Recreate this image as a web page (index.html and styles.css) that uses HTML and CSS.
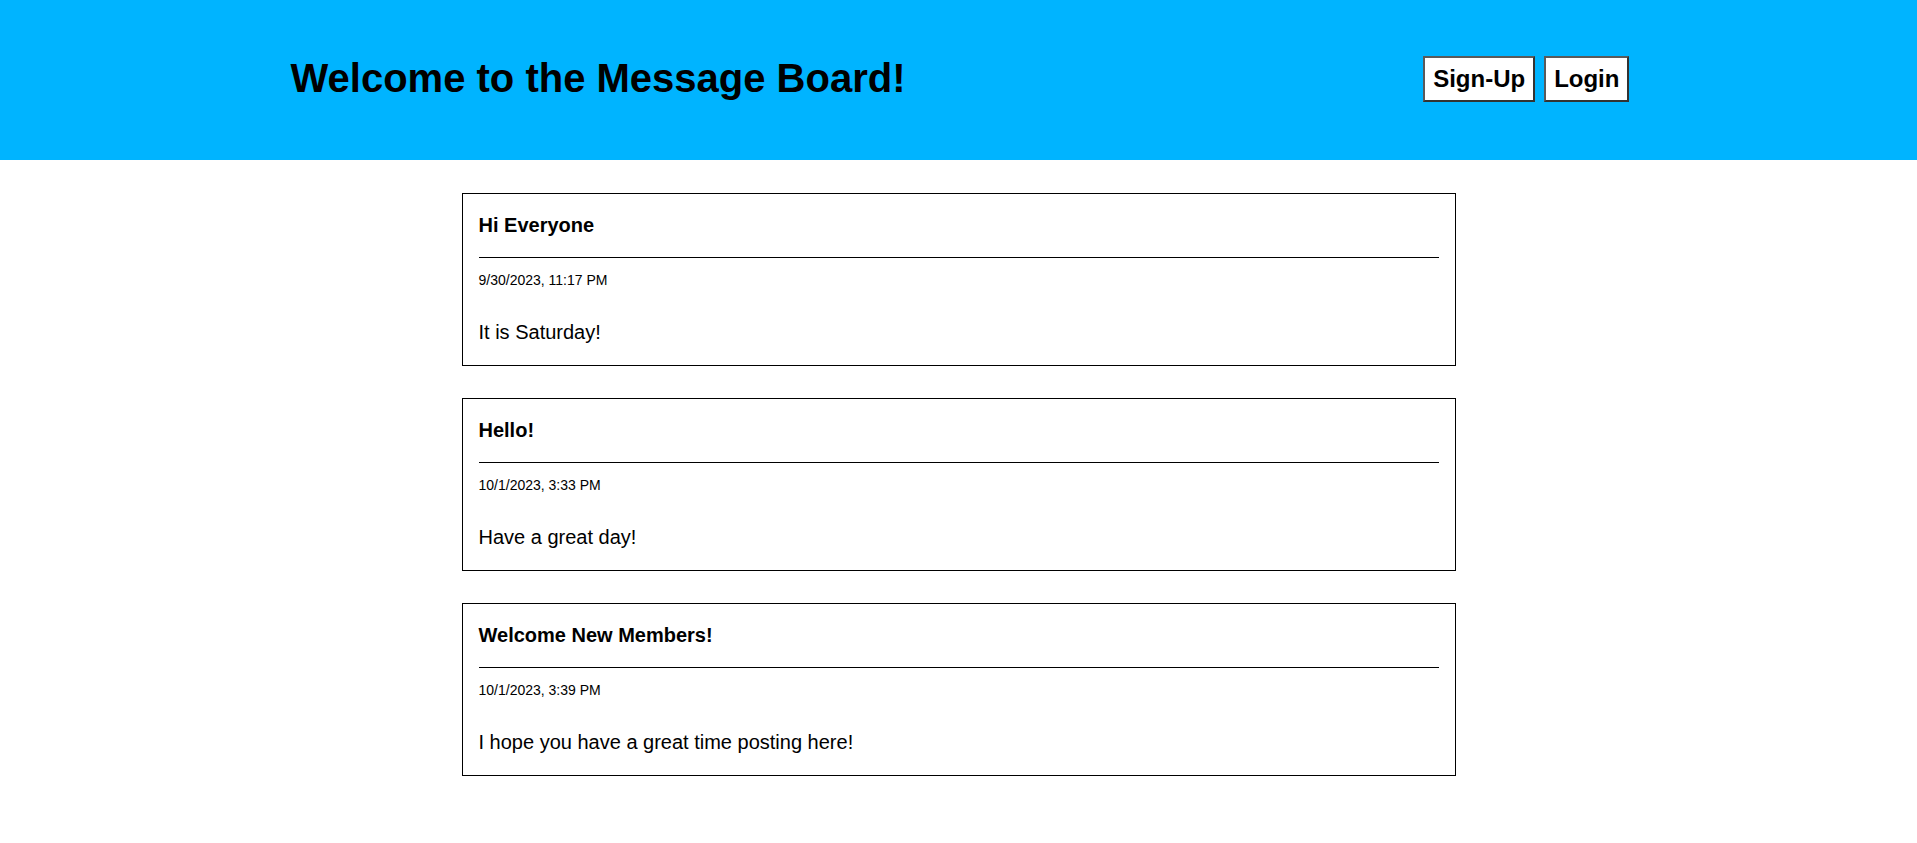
FILE: index.html
```html
<!DOCTYPE html>
<html lang="en">
<head>
<meta charset="utf-8">
<title>Message Board</title>
<link rel="stylesheet" href="styles.css">
</head>
<body>
<header class="site-header">
  <div class="header-inner">
    <h1 class="site-title">Welcome to the Message Board!</h1>
    <nav class="auth">
      <button class="auth-btn">Sign-Up</button>
      <button class="auth-btn">Login</button>
    </nav>
  </div>
</header>
<main class="board">
  <article class="message">
    <h2 class="message-title">Hi Everyone</h2>
    <hr class="message-rule">
    <div class="message-date">9/30/2023, 11:17 PM</div>
    <p class="message-body">It is Saturday!</p>
  </article>
  <article class="message">
    <h2 class="message-title">Hello!</h2>
    <hr class="message-rule">
    <div class="message-date">10/1/2023, 3:33 PM</div>
    <p class="message-body">Have a great day!</p>
  </article>
  <article class="message">
    <h2 class="message-title">Welcome New Members!</h2>
    <hr class="message-rule">
    <div class="message-date">10/1/2023, 3:39 PM</div>
    <p class="message-body">I hope you have a great time posting here!</p>
  </article>
</main>
</body>
</html>
```
FILE: styles.css
```css
* { box-sizing: border-box; }

body {
  margin: 0;
  font-family: "Liberation Sans", Arial, sans-serif;
  color: #000;
  background: #fff;
}

.site-header {
  background: #00b4ff;
  height: 160px;
}

.header-inner {
  width: 70%;
  height: 100%;
  margin: 0 auto;
  padding-left: 3px;
  display: flex;
  align-items: center;
  justify-content: space-between;
}

.site-title {
  margin: 0 0 5px;
  font-size: 40px;
  line-height: 46px;
  font-weight: 700;
}

.auth {
  display: flex;
  gap: 9px;
  margin-bottom: 2px;
}

.auth-btn {
  font-family: "Liberation Sans", Arial, sans-serif;
  font-size: 24px;
  line-height: 28px;
  font-weight: 700;
  color: #000;
  background: #fff;
  padding: 7px 8px;
  border: 2px solid;
  border-color: #5a5a5a #333 #333 #5a5a5a;
  border-radius: 0;
}

.board {
  display: flex;
  flex-direction: column;
  gap: 32px;
  padding-top: 33px;
}

.message {
  width: 994px;
  margin: 0 auto;
  border: 1px solid #000;
  padding: 20px 16px 21px;
}

.message-title {
  margin: 0;
  font-size: 20px;
  line-height: 23px;
  font-weight: 700;
}

.message-rule {
  margin: 20px 0 14px;
  height: 0;
  border: 0;
  border-top: 1px solid #000;
}

.message-date {
  font-size: 14px;
  line-height: 16px;
}

.message-body {
  margin: 33px 0 0;
  font-size: 20px;
  line-height: 23px;
}
```
